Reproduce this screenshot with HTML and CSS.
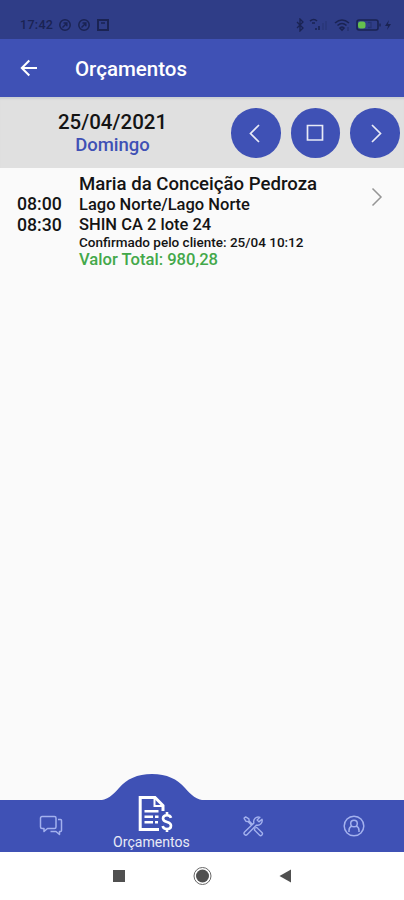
FILE: index.html
```html
<!DOCTYPE html>
<html lang="pt-BR">
<head>
    <meta charset="UTF-8">
    <meta name="viewport" content="width=device-width, initial-scale=1">
    <title>Orçamentos</title>
    <link rel="stylesheet" href="styles.css">
</head>
<body>
    <div class="app">
        <div class="status-bar">
            <span class="status-time">17:42</span>
            <svg class="status-left" width="54" height="14" viewBox="0 0 54 14" fill="none" stroke="currentColor" stroke-width="1.5">
                <circle cx="7" cy="7" r="5.2"/>
                <path d="M4.5 9.5l4-4M5.5 5h3.3v3.3"/>
                <circle cx="26" cy="7" r="5.2"/>
                <path d="M23.5 9.5l4-4M24.5 5h3.3v3.3"/>
                <rect x="40" y="2" width="10" height="10" stroke-width="2"/>
                <path d="M43 5h4"/>
            </svg>
            <svg class="status-right" width="100" height="14" viewBox="0 0 100 14" fill="none" stroke="currentColor" stroke-width="1.3">
                <path d="M3 4l6 6-3 3V1l3 3-6 6"/>
                <path d="M16 3q4-3 7 0M18 5h3M22 12v-2M25 12V8" stroke-width="1.6"/>
                <path d="M29 12V5M32 12V3" opacity=".3"/>
                <path d="M41 5q7-6 14 0M43.5 7.500q4.500-4 9 0M46 10q2-2 4 0l-2 2z" stroke-width="1.6"/>
                <path d="M54 9v4" opacity=".5"/>
                <rect x="63" y="2" width="21" height="10" rx="2" stroke-width="1.6"/>
                <rect class="battery-level" x="64" y="3.500" width="7.500" height="7" rx="2.500"/>
                <path d="M74 4.500h3v5h-3" opacity=".4"/>
                <path d="M86 5.500v3"/>
                <path d="M95 2l-4 6h3l-1 4 4-6h-3z" fill="currentColor" stroke="none"/>
            </svg>
        </div>

        <header class="toolbar">
            <svg class="back-icon" width="20" height="20" viewBox="0 0 20 20">
                <path d="M18 10H3M10.300 2.500L2.800 10l7.500 7.500"/>
            </svg>
            <h1 class="toolbar-title">Orçamentos</h1>
        </header>

        <section class="date-bar">
            <div class="date-info">
                <div class="date">25/04/2021</div>
                <div class="weekday">Domingo</div>
            </div>
            <div class="date-buttons">
                <button class="round-btn">
                    <svg width="24" height="24" viewBox="0 0 24 24"><path d="M15 4l-8.500 8.500L15 21"/></svg>
                </button>
                <button class="round-btn">
                    <svg width="24" height="24" viewBox="0 0 24 24"><path d="M4.500 4.500h15v14.500h-15z"/></svg>
                </button>
                <button class="round-btn">
                    <svg width="24" height="24" viewBox="0 0 24 24"><path d="M9 4l8.500 8.500L9 21"/></svg>
                </button>
            </div>
        </section>

        <main class="list">
            <article class="visit">
                <div class="visit-hours">
                    <div>08:00</div>
                    <div>08:30</div>
                </div>
                <div class="visit-info">
                    <div class="client">Maria da Conceição Pedroza</div>
                    <div class="district">Lago Norte/Lago Norte</div>
                    <div class="address">SHIN CA 2 lote 24</div>
                    <div class="confirmed">Confirmado pelo cliente: 25/04 10:12</div>
                    <div class="total">Valor Total: 980,28</div>
                </div>
                <svg class="visit-arrow" width="12" height="20" viewBox="0 0 12 20"><path d="M1.500 1.500L10 10l-8.500 8.500"/></svg>
            </article>
        </main>

        <nav class="tabs">
            <svg class="tabs-bump" width="110" height="29" viewBox="0 0 110 29">
                <path d="M0 27.500C11 27.500 16 21.500 22 15C30 6 40 1 55 1S80 6 88 15C94 21.500 99 27.500 110 27.500V29H0z"/>
            </svg>
            <a class="tab">
                <svg class="tab-icon" width="24" height="24" viewBox="0 0 24 24">
                    <path d="M3 2.500h12.500a1.500 1.500 0 0 1 1.500 1.500v9a1.500 1.500 0 0 1-1.500 1.500H8.500L5 17.500v-3H3A1.500 1.500 0 0 1 1.500 13V4A1.500 1.500 0 0 1 3 2.500z"/>
                    <path d="M19 5.500h2.500a1 1 0 0 1 1 1v10a1 1 0 0 1-1 1h-1v3l-3.500-3h-5.500"/>
                </svg>
            </a>
            <a class="tab tab-active">
                <svg class="invoice-icon" width="36" height="38" viewBox="0 0 36 38">
                    <path d="M22 34.500H3.200V2.500H18L26 10.500V16"/>
                    <path d="M17.500 2.500v8.500H26" stroke-width="2"/>
                    <path d="M7.500 16.300h14M7.500 21.800h8.500M18 21.800h3.500M7.500 27.300h8.500M18 27.300h3" stroke-width="2.400"/>
                    <path d="M34 22.800C33.500 21 32 20.300 30 20.300C27.500 20.300 26 21.500 26 23.500C26 28.500 34 25.700 34 30.700C34 33 32.300 34 30 34C27.500 34 26 33 25.700 31M30 17v3.500M30 34v3" stroke-width="2.600"/>
                </svg>
                <span class="tab-label">Orçamentos</span>
            </a>
            <a class="tab">
                <svg class="tab-icon" width="22" height="22" viewBox="0 0 24 24">
                    <path d="M2 3.500L4 2l3.500 2.200.3 2.300 4 4M2 3.500l2.200 3.300 2.300.4 4 4M14.500 14l1.500-.5 5.700 5.700a1.700 1.700 0 0 1-2.700 2.700l-5.500-5.600.5-1.800"/>
                    <path d="M19.500 2.500a5 5 0 0 0-6.500 6.200L2.800 18.500a1.900 1.900 0 0 0 2.900 2.800L15.800 11a5 5 0 0 0 6-6.300L18.500 7.500l-2-2z"/>
                </svg>
            </a>
            <a class="tab">
                <svg class="tab-icon" width="24" height="24" viewBox="0 0 24 24">
                    <circle cx="12" cy="12" r="9.800"/>
                    <circle cx="12" cy="9.500" r="3.300"/>
                    <path d="M7 18v-1.500q0-3.500 3-4.500M17 18v-1.500q0-3.500-3-4.500"/>
                </svg>
            </a>
        </nav>

        <div class="system-nav">
            <svg width="404" height="48" viewBox="0 0 404 48">
                <rect x="113" y="18" width="12" height="12"/>
                <circle cx="202.500" cy="24" r="6.500"/>
                <circle class="home-ring" cx="202.500" cy="24" r="8.500"/>
                <path d="M279.500 24L291 17.500v13z"/>
            </svg>
        </div>
    </div>
</body>
</html>
```
FILE: styles.css
```css
* {
    box-sizing: border-box;
}
body {
    margin: 0;
    font-family: Roboto, "Liberation Sans", sans-serif;
    font-weight: 500;
    color: #141414;
    background-color: #fafafa;
}
.app {
    display: flex;
    flex-direction: column;
    width: 404px;
    height: 900px;
    overflow: hidden;
}
svg {
    display: block;
    flex: none;
}

/* status bar */
.status-bar {
    display: flex;
    align-items: center;
    height: 39px;
    padding: 10px 10px 0 20px;
    background-color: #2f3d87;
    color: #1a2353;
}
.status-time {
    width: 32px;
    font-size: 12.5px;
    letter-spacing: 0.3px;
    white-space: nowrap;
}
.status-left {
    margin-left: 6px;
}
.status-right {
    margin-left: auto;
    margin-right: 0;
}
.battery-level {
    fill: #65c04e;
    stroke: none;
}

/* header */
.toolbar {
    display: flex;
    align-items: center;
    height: 58px;
    padding: 0 20px 0 19px;
    background-color: #3f51b5;
    color: #fff;
}
.back-icon {
    fill: none;
    stroke: #fff;
    stroke-width: 2;
}
.toolbar-title {
    margin: 2px 0 0 36px;
    font-size: 20.5px;
    font-weight: 500;
    line-height: 24px;
}
.date-bar {
    display: flex;
    height: 71px;
    padding: 11px 4.5px 0 0;
    background-color: #e0e0e0;
    box-shadow: inset 0 3px 2px -1px #cbd0d2;
}
.date-info {
    flex: 1;
    margin-right: 6px;
    text-align: center;
}
.date {
    font-size: 20.5px;
    line-height: 24px;
    padding-top: 2px;
}
.weekday {
    font-size: 18.5px;
    line-height: 22px;
    color: #3f51b5;
}
.date-buttons {
    display: flex;
    gap: 10px;
}
.round-btn {
    display: flex;
    align-items: center;
    justify-content: center;
    width: 49.5px;
    height: 49.5px;
    padding: 0;
    border: none;
    border-radius: 50%;
    background-color: #3f51b5;
}
.round-btn svg {
    fill: none;
    stroke: #e8eaf6;
    stroke-width: 1.7;
}

/* visits */
.list {
    flex: 1;
    background-color: #fafafa;
}
.visit {
    display: flex;
    padding: 5px 21px 0 17px;
}
.visit-hours {
    width: 62px;
    padding-top: 21px;
    font-size: 17.7px;
    line-height: 21px;
}
.visit-info {
    flex: 1;
    white-space: nowrap;
}
.client {
    font-size: 18.6px;
    line-height: 22px;
}
.district,
.address {
    font-size: 16.5px;
    line-height: 20px;
}
.confirmed {
    font-size: 13.5px;
    line-height: 14px;
}
.total {
    padding-top: 1px;
    font-size: 16.6px;
    line-height: 20px;
    color: #43a84a;
}
.visit-arrow {
    margin-top: 14px;
    fill: none;
    stroke: #959595;
    stroke-width: 1.5;
}

/* bottom tabs */
.tabs {
    position: relative;
    display: flex;
    height: 52px;
    background-color: #3f51b5;
}
.tabs-bump {
    position: absolute;
    top: -27px;
    left: 97px;
    fill: #3f51b5;
}
.tab {
    position: relative;
    display: flex;
    flex: 1;
    flex-direction: column;
    align-items: center;
    justify-content: center;
}
.tab-icon {
    fill: none;
    stroke: #a3b1ee;
    stroke-width: 1.5;
    stroke-linejoin: round;
}
.tab-active {
    justify-content: flex-end;
    padding-bottom: 1px;
    color: #e8eaf6;
}
.invoice-icon {
    margin-left: 7px;
    fill: none;
    stroke: #fff;
    stroke-width: 3;
}
.tab-label {
    font-size: 14.1px;
    font-weight: 400;
    line-height: 18px;
}

/* android buttons */
.system-nav {
    height: 48px;
    background-color: #fff;
    fill: #505050;
}
.home-ring {
    fill: none;
    stroke: #686868;
    stroke-width: 1;
}
```
